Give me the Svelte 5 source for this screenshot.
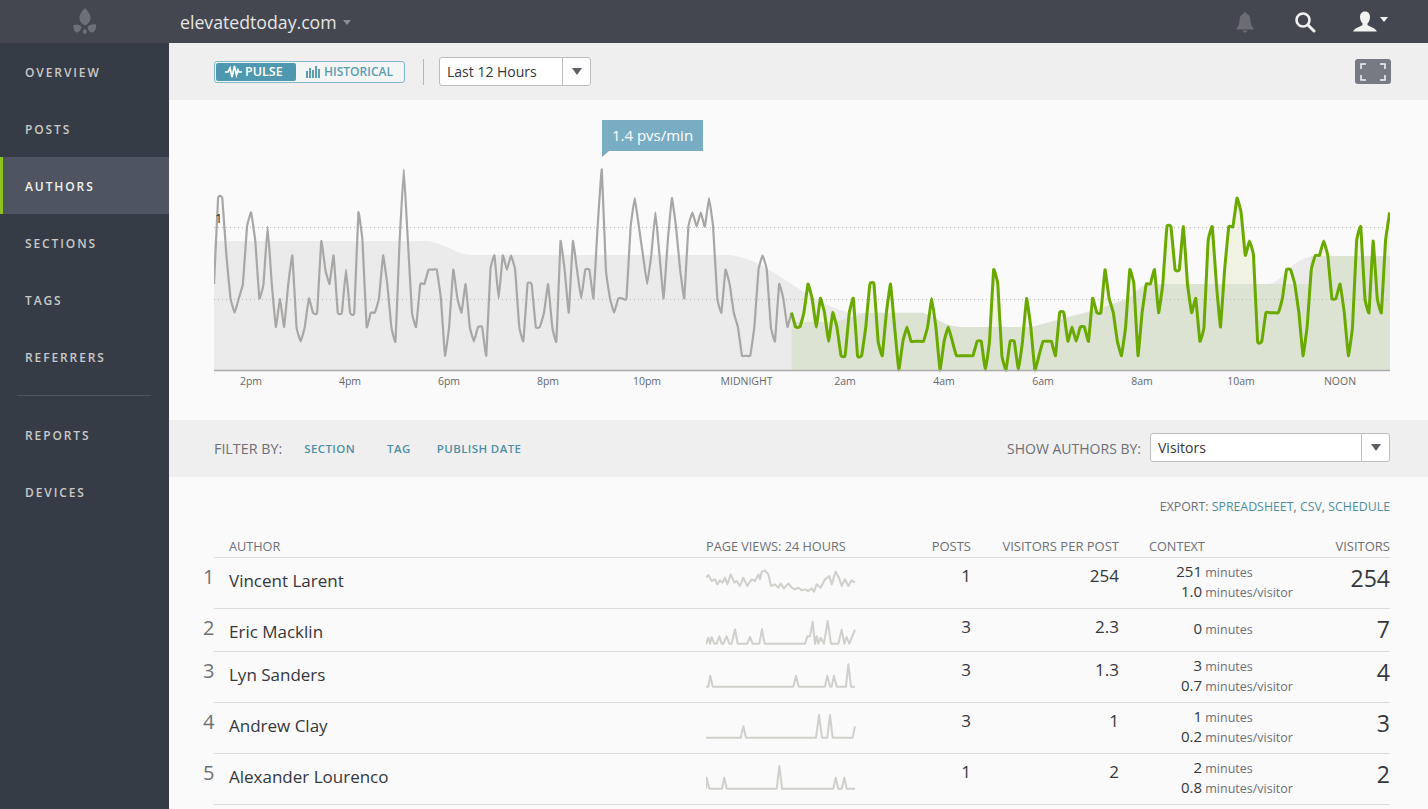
<script>
  const nav = ["OVERVIEW", "POSTS", "AUTHORS", "SECTIONS", "TAGS", "REFERRERS"];
  const nav2 = ["REPORTS", "DEVICES"];

  const grayLevels = [
    6,12,12,8,5,4,5,6,10,11,9,5,6,10,6,3,5,3,6,8,3,2,3,5,4,4,9,7,6,8,4,4,7,4,4,11,9,3,4,4,5,8,6,3,2,9,14,9,4,3,
    6,6,7,7,7,5,1,3,7,5,4,6,3,2,3,3,1,7,8,5,8,7,8,7,3,2,6,6,3,3,4,6,3,2,9,7,4,9,7,5,7,7,5,10,14,7,5,4,5,5,
    5,10,12,10,8,6,8,11,8,5,9,12,10,7,5,10,11,10,11,10,12,10,5,4,7,6,4,3,1,1,1,3,7,8,7,3,2,6,5,3,4
  ];
  const greenLevels = [
    4,3,3,4,6,5,3,5,4,2,4,3,1,1,4,5,1,1,3,6,6,2,1,4,6,3,0,2,3,2,2,2,2,3,5,3,0,2,3,2,1,1,1,1,1,2,2,0,2,7,6,
    1,0,2,2,0,2,5,3,0,1,2,2,2,1,4,4,2,3,2,3,3,2,5,4,4,7,5,4,2,1,3,7,6,1,4,6,6,7,4,6,10,10,7,7,10,6,4,5,2,3,
    9,10,6,3,7,10,10,12,11,8,9,8,2,2,4,4,4,4,5,7,7,6,4,1,3,7,8,8,9,8,5,5,6,4,1,3,9,10,5,4,9,5,4,9,11
  ];

  // cardinal curve through the samples, the chart's peaks are slightly rounded
  function toPath(levels, start) {
    const p = levels.map((l, i) => [214 + (start + i) * 4.125, 370 - l * 14.33]);
    const k = 0.04;
    let d = `M${p[0][0].toFixed(1)} ${p[0][1].toFixed(1)}`;
    for (let i = 0; i < p.length - 1; i++) {
      const a = p[i - 1] || p[i];
      const b = p[i];
      const c = p[i + 1];
      const e = p[i + 2] || c;
      const c1x = b[0] + k * (c[0] - a[0]);
      const c1y = b[1] + k * (c[1] - a[1]);
      const c2x = c[0] - k * (e[0] - b[0]);
      const c2y = c[1] - k * (e[1] - b[1]);
      d += `C${c1x.toFixed(1)} ${c1y.toFixed(1)} ${c2x.toFixed(1)} ${c2y.toFixed(1)} ${c[0].toFixed(1)} ${c[1].toFixed(1)}`;
    }
    return d;
  }
  const grayLine = toPath(grayLevels, 0);
  const greenLine = toPath(greenLevels, 140);
  const greenUnder = `${greenLine}L1390 370L791.5 370Z`;

  const ticks = [
    ["2pm", 251], ["4pm", 350], ["6pm", 449], ["8pm", 548], ["10pm", 647], ["MIDNIGHT", 746.5],
    ["2am", 845], ["4am", 944], ["6am", 1043], ["8am", 1142], ["10am", 1241], ["NOON", 1340]
  ];

  const rows = [
    { name: "Vincent Larent", posts: "1", vpp: "254", min: "251", mpv: "1.0", total: "254", top: 81,
      spark: "48,140 55,132 65,150 75,145 82,160 90,148 97,155 105,140 112,160 122,130 133,155 140,150 150,165 160,140 172,165 185,145 195,150 205,130 210,145 215,122 225,118 235,130 243,165 255,160 265,170 272,158 282,172 295,157 305,170 315,175 325,170 335,178 345,175 355,180 365,172 372,182 380,160 392,170 405,145 418,135 425,160 437,122 447,140 455,165 465,145 475,165 485,148 495,155" },
    { name: "Eric Macklin", posts: "3", vpp: "2.3", min: "0", mpv: null, total: "7", top: 234,
      spark: "48,340 55,320 60,338 65,318 73,338 80,338 88,316 95,338 100,338 110,316 118,338 125,338 135,295 143,338 172,338 180,318 188,338 208,338 216,295 224,338 345,338 352,316 360,316 368,272 375,338 380,316 385,338 392,320 402,338 413,270 423,338 445,338 455,296 463,338 470,318 478,338 495,296" },
    { name: "Lyn Sanders", posts: "3", vpp: "1.3", min: "3", mpv: "0.7", total: "4", top: 363,
      spark: "48,467 55,467 61,434 68,467 310,467 318,434 326,467 405,467 412,434 420,467 425,467 432,434 440,467 468,467 475,400 483,467 495,467" },
    { name: "Andrew Clay", posts: "3", vpp: "1", min: "1", mpv: "0.2", total: "3", top: 516,
      spark: "48,620 152,620 160,586 168,620 378,620 387,552 396,620 412,620 420,552 428,620 488,620 495,586" },
    { name: "Alexander Lourenco", posts: "1", vpp: "2", min: "2", mpv: "0.8", total: "2", top: 669,
      spark: "48,773 50,740 58,773 96,773 103,740 110,773 260,773 268,705 276,773 430,773 437,740 445,773 455,773 463,740 470,773 495,773" }
  ];
</script>

<div class="shell">
  <header class="topbar">
    <div class="logo">
      <svg width="26" height="28" viewBox="0 0 26 28">
        <path d="M13 0 C17 4 19 8 18.500 11 C18 14 16 16 13 17.500 C10 16 8 14 7.500 11 C7 8 9 4 13 0Z" fill="#6d7076" />
        <path d="M1.500 17 C5 15.500 8.500 17 9.500 19 C9 22 7 24.500 4.500 24.500 C2 23.500 1 20 1.500 17Z" fill="#6d7076" />
        <path d="M24 16.500 C21 15.500 17 17 15.500 19 C16 22 18 24.500 20.500 24.500 C23 23.500 24.500 20 24 16.500Z" fill="#6d7076" />
        <path d="M12.800 21 C14.800 22 15.800 24 12.800 26.500 C10 24 10.800 22 12.800 21Z" fill="#6d7076" />
      </svg>
    </div>
    <div class="site">elevatedtoday.com<span class="site-caret"></span></div>
    <div class="top-icons">
      <svg class="bell" width="20" height="22" viewBox="0 0 20 22">
        <path d="M10 1 C11 1 11.500 1.800 11.500 2.800 C14.500 3.800 15.500 6.500 15.500 9.500 C15.500 13 16.500 15 18.500 17 L18.500 18.500 L1.500 18.500 L1.500 17 C3.500 15 4.500 13 4.500 9.500 C4.500 6.500 5.500 3.800 8.500 2.800 C8.500 1.800 9 1 10 1Z" fill="#6b6d72" />
        <path d="M7.500 19.500 L12.500 19.500 C12 21 11 21.500 10 21.500 C9 21.500 8 21 7.500 19.500Z" fill="#6b6d72" />
      </svg>
      <svg class="search" width="22" height="22" viewBox="0 0 22 22">
        <circle cx="9" cy="9" r="6.500" fill="none" stroke="#f2f2f0" stroke-width="2.600" />
        <path d="M14 14 L20 20" stroke="#f2f2f0" stroke-width="3" stroke-linecap="round" />
      </svg>
      <svg class="user" width="24" height="22" viewBox="0 0 24 22">
        <path d="M12 0.500 C15.500 0.500 17 3 17 6 C17 9 15.500 11.500 14.500 12.500 L14.500 14 C17 16 22 16.500 24 20.500 L0 20.500 C2 16.500 7 16 9.500 14 L9.500 12.500 C8.500 11.500 7 9 7 6 C7 3 8.500 0.500 12 0.500Z" fill="#f2f2f0" />
      </svg>
      <span class="user-caret"></span>
    </div>
  </header>

  <div class="body">
    <nav class="side">
      {#each nav as item}
        <div class="nav-item" class:active={item === "AUTHORS"}>{item}</div>
      {/each}
      <div class="nav-sep"></div>
      {#each nav2 as item}
        <div class="nav-item">{item}</div>
      {/each}
    </nav>

    <main class="main">
      <section class="toolbar">
        <div class="toggle">
          <div class="toggle-on">
            <svg width="17" height="13" viewBox="0 0 17 13">
              <path d="M0 7 L3 7 L5 3 L7 12 L9.500 1 L11.500 10 L13 5 L14 7 L17 7" fill="none" stroke="#fff" stroke-width="1.700" />
            </svg>
            PULSE
          </div>
          <div class="toggle-off">
            <svg width="15" height="13" viewBox="0 0 15 13">
              <path d="M1 6V13M4 3V13M7 5V13M10 1V13M13 4V13" stroke="#5b9db3" stroke-width="2" />
            </svg>
            HISTORICAL
          </div>
        </div>
        <div class="tool-sep"></div>
        <div class="select range">
          <span class="select-text">Last 12 Hours</span>
          <span class="select-arrow"></span>
        </div>
        <div class="expand">
          <svg width="26" height="18" viewBox="0 0 26 18">
            <path d="M1 6V1H6M20 1H25V6M25 12V17H20M6 17H1V12" fill="none" stroke="#f5f5f5" stroke-width="1.500" />
          </svg>
        </div>
      </section>

      <section class="chart">
        <div class="tip">1.4 pvs/min</div>
        <svg class="plot" width="1176" height="320" viewBox="214 100 1176 320">
          <path d="M214 370 L214 241 L428 241 C450 245 455 255 475 255 L728 255 C770 258 800 300 850 312.700 L923 312.700 C945 322 945 327 965 327 L1032 327 C1060 318 1100 310 1127 298 C1135 292 1140 284 1150 284 L1268 284 C1285 282 1290 256 1318 256 L1390 256 L1390 370 Z" fill="#ebebeb" />
          <path d={greenUnder} fill="#f0f2e2" />
          <path d="M791.500 370 L791.500 322 L835 322 L865 312.700 L923 312.700 C945 322 945 327 965 327 L1032 327 L1090 312 L1125 300 L1147 284 L1309 284 L1311 256 L1390 256 L1390 370 Z" fill="#dde3d3" />
          <line x1="214" x2="1390" y1="227.500" y2="227.500" class="grid" />
          <line x1="214" x2="1390" y1="299.500" y2="299.500" class="grid" />
          <path d={grayLine} fill="none" stroke="#a9a7a5" stroke-width="2.200" stroke-linejoin="round" />
          <path d={greenLine} fill="none" stroke="#6aa900" stroke-width="3" stroke-linejoin="round" />
          <line x1="214" x2="1390" y1="370.500" y2="370.500" stroke="#aaaaac" stroke-width="1.500" />
          <text x="215" y="223" class="y-label">1</text>
          {#each ticks as [label, x]}
            <text {x} y="385" text-anchor="middle" class="tick">{label}</text>
          {/each}
        </svg>
      </section>

      <section class="filters">
        <span class="filter-label">FILTER BY:</span>
        <span class="filter-link section">SECTION</span>
        <span class="filter-link tag">TAG</span>
        <span class="filter-link date">PUBLISH DATE</span>
        <span class="show-label">SHOW AUTHORS BY:</span>
        <div class="select visitors">
          <span class="select-text">Visitors</span>
          <span class="select-arrow"></span>
        </div>
      </section>

      <section class="table">
        <div class="export">EXPORT: <span>SPREADSHEET</span>, <span>CSV</span>, <span>SCHEDULE</span></div>
        <div class="row head">
          <div class="c-author">AUTHOR</div>
          <div>PAGE VIEWS: 24 HOURS</div>
          <div class="num">POSTS</div>
          <div class="num">VISITORS PER POST</div>
          <div class="c-context">CONTEXT</div>
          <div class="num">VISITORS</div>
        </div>
        {#each rows as r, i}
          <div class="row" class:tall={r.mpv}>
            <div class="c-author">
              <span class="rank">{i + 1}</span>
              <span class="name">{r.name}</span>
            </div>
            <svg class="spark" width="150" height="36" viewBox="48 {r.top} 450 108">
              <polyline points={r.spark} fill="none" stroke="#cfcfcb" stroke-width="6" stroke-linejoin="round" />
            </svg>
            <div class="num val">{r.posts}</div>
            <div class="num val">{r.vpp}</div>
            <div class="context">
              <div class="ctx-line"><span class="ctx-num">{r.min}</span> minutes</div>
              {#if r.mpv}
                <div class="ctx-line"><span class="ctx-num">{r.mpv}</span> minutes/visitor</div>
              {/if}
            </div>
            <div class="num total">{r.total}</div>
          </div>
        {/each}
      </section>
    </main>
  </div>
</div>

<style>
  :global(body) {
    margin: 0;
    background: #fafafa;
    overflow: hidden;
  }
  .shell {
    height: 809px;
    overflow: hidden;
    display: flex;
    flex-direction: column;
    font-family: "Open Sans", "Liberation Sans", sans-serif;
    color: #34373c;
  }

  /* top bar */
  .topbar {
    height: 43px;
    flex: none;
    background: #444750;
    display: flex;
    align-items: center;
  }
  .logo {
    width: 169px;
    flex: none;
    display: flex;
    justify-content: center;
  }
  .site {
    margin-left: 11px;
    font-size: 17.700px;
    color: #e6e6e4;
    display: flex;
    align-items: center;
  }
  .site-caret {
    margin-left: 6px;
    border-left: 4px solid transparent;
    border-right: 4px solid transparent;
    border-top: 5px solid #8c8e93;
    margin-top: 2px;
  }
  .top-icons {
    margin-left: auto;
    display: flex;
    align-items: center;
    padding-right: 40px;
  }
  .bell {
    margin-right: 39px;
  }
  .search {
    margin-right: 37px;
  }
  .user-caret {
    margin-left: 3px;
    margin-bottom: 5px;
    border-left: 4px solid transparent;
    border-right: 4px solid transparent;
    border-top: 5px solid #f2f2f0;
  }

  .body {
    display: flex;
    flex: 1;
    min-height: 0;
  }

  /* sidebar */
  .side {
    width: 169px;
    flex: none;
    background: #363c45;
  }
  .nav-item {
    height: 57px;
    line-height: 59px;
    padding-left: 25px;
    font-size: 12px;
    font-weight: 600;
    letter-spacing: 1.900px;
    color: #c9c9c7;
    box-sizing: border-box;
  }
  .nav-item.active {
    background: #4e5560;
    border-left: 3px solid #8dc21f;
    padding-left: 22px;
    color: #f2f2f0;
  }
  .nav-sep {
    height: 1px;
    background: #4e5560;
    margin: 10px 18px 10px 17px;
  }

  .main {
    flex: 1;
    min-width: 0;
  }

  /* toolbar */
  .toolbar {
    height: 57px;
    background: #efefef;
    display: flex;
    align-items: center;
    padding: 0 37px 0 45px;
    box-sizing: border-box;
  }
  .toggle {
    width: 191px;
    height: 22px;
    box-sizing: border-box;
    border: 1px solid #7fb6c8;
    border-radius: 3px;
    padding: 1px;
    display: flex;
    font-size: 12px;
    font-weight: 600;
    background: #f4f6f6;
  }
  .toggle-on {
    width: 80px;
    box-sizing: border-box;
    padding-left: 9px;
    background: #4e98b0;
    color: #fff;
    border-radius: 2px;
    display: flex;
    align-items: center;
    gap: 3px;
    font-size: 12.500px;
  }
  .toggle-off {
    flex: 1;
    color: #5b9db3;
    display: flex;
    align-items: center;
    justify-content: center;
    gap: 3px;
  }
  .tool-sep {
    width: 1px;
    height: 26px;
    background: #b5b5b5;
    margin: 0 15px 0 18px;
  }
  .select {
    background: #fff;
    border: 1px solid #bdbdbd;
    border-radius: 3px;
    box-sizing: border-box;
    display: flex;
    align-items: center;
    font-size: 14px;
    color: #34373c;
  }
  .select-text {
    padding-left: 7px;
  }
  .select-arrow {
    margin-left: auto;
    width: 27px;
    align-self: stretch;
    border-left: 1px solid #bdbdbd;
    display: flex;
    align-items: center;
    justify-content: center;
  }
  .select-arrow::after {
    content: "";
    border-left: 5px solid transparent;
    border-right: 5px solid transparent;
    border-top: 7px solid #5d6067;
  }
  .range {
    width: 152px;
    height: 29px;
  }
  .expand {
    margin-left: auto;
    width: 36px;
    height: 25px;
    background: #777a83;
    border-radius: 3px;
    display: flex;
    align-items: center;
    justify-content: center;
  }

  /* chart */
  .chart {
    height: 320px;
    position: relative;
    padding-left: 45px;
    background: #fafafa;
  }
  .plot {
    display: block;
  }
  .grid {
    stroke: #b9b9b9;
    stroke-width: 1;
    stroke-dasharray: 1 3;
  }
  .tick {
    font-size: 10.500px;
    fill: #66686d;
  }
  .y-label {
    font-size: 13px;
    fill: #26282c;
  }
  .tip {
    position: absolute;
    left: 433px;
    top: 20px;
    width: 101px;
    height: 31px;
    line-height: 30px;
    text-align: center;
    background: #78adc4;
    color: #fff;
    font-size: 15px;
  }
  .tip::after {
    content: "";
    position: absolute;
    left: 0;
    top: 31px;
    border-top: 6px solid #78adc4;
    border-right: 7px solid transparent;
  }

  /* filter bar */
  .filters {
    height: 57px;
    background: #efefef;
    display: flex;
    align-items: center;
    padding: 0 38px 0 45px;
    box-sizing: border-box;
  }
  .filter-label {
    font-size: 14.300px;
    color: #6e7076;
  }
  .show-label {
    font-size: 14px;
    color: #6e7076;
    margin-left: auto;
    margin-right: 9px;
  }
  .filter-link {
    font-size: 11.500px;
    font-weight: 600;
    letter-spacing: 0.400px;
    color: #4f8fa3;
  }
  .section {
    margin-left: 22px;
  }
  .tag {
    margin-left: 32px;
  }
  .date {
    margin-left: 26px;
  }
  .visitors {
    width: 240px;
    height: 29px;
    margin-top: -1px;
    margin-bottom: 1px;
  }

  /* table */
  .table {
    padding: 22px 38px 0 45px;
  }
  .export {
    text-align: right;
    font-size: 12.350px;
    line-height: 16px;
    color: #6e7076;
    margin-bottom: 23px;
  }
  .export span {
    color: #4f8fa3;
  }
  .row {
    display: grid;
    grid-template-columns: 492px 150px 115px 148px 180px 91px;
    border-bottom: 1px solid #dcdcdc;
    height: 43px;
    box-sizing: border-box;
    align-items: start;
  }
  .row.tall {
    height: 51px;
  }
  .row.head {
    height: 20px;
    font-size: 12.700px;
    line-height: 16px;
    color: #6e7076;
  }
  .row.head .num {
    font-size: 13px;
  }
  .c-author {
    padding-left: 15px;
    position: relative;
  }
  .c-context {
    padding-left: 30px;
  }
  .num {
    text-align: right;
  }
  .rank {
    position: absolute;
    left: -11px;
    top: 6px;
    font-size: 20px;
    line-height: 26px;
    color: #6f7175;
  }
  .name {
    display: block;
    font-size: 17px;
    line-height: 24px;
    padding-top: 11px;
  }
  .spark {
    display: block;
  }
  .val {
    font-size: 17px;
    line-height: 24px;
    padding-top: 6px;
  }
  .total {
    font-size: 23px;
    line-height: 28px;
    padding-top: 6px;
  }
  .context {
    align-self: center;
    font-size: 12.500px;
    line-height: 20px;
    color: #6e7076;
    margin-bottom: 2px;
  }
  .ctx-line {
    height: 20px;
    white-space: nowrap;
  }
  .ctx-num {
    display: inline-block;
    width: 83px;
    text-align: right;
    font-size: 15px;
    line-height: 18px;
    color: #34373c;
  }
</style>
